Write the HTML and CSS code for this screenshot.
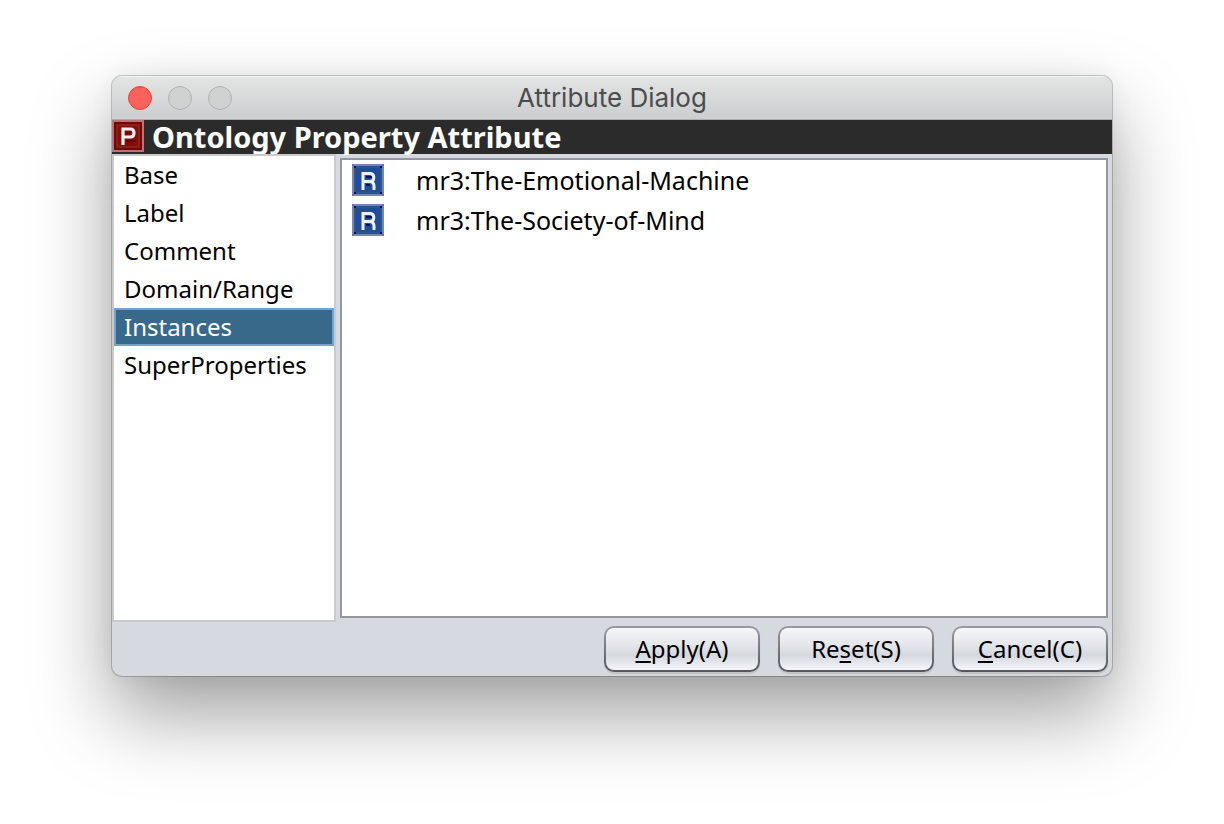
FILE: index.html
```html
<!DOCTYPE html>
<html lang="en">
<head>
<meta charset="utf-8">
<title>Attribute Dialog</title>
<link rel="stylesheet" href="styles.css">
</head>
<body>
<svg width="0" height="0" class="defs" aria-hidden="true">
  <symbol id="resource" viewBox="0 0 16 16">
    <rect width="16" height="16" fill="#7484b6"/>
    <path d="M0 0h1v1H0zM15 0h1v1h-1zM0 15h1v1H0zM15 15h1v1h-1z" fill="#6377ac"/>
    <rect x="1" y="1" width="14" height="14" fill="#2c5594"/>
    <path d="M1 1h1v1H1zM14 1h1v1h-1zM1 14h1v1H1zM14 14h1v1h-1z" fill="#04106e"/>
    <rect x="2" y="2" width="12" height="12" fill="#1f4f93"/>
    <path d="M7 6h3v1H7zM7 10h2v1H7z" fill="#04106e"/>
    <path d="M5.500 13V4.700H9Q10.900 4.700 10.900 6.700Q10.900 8.700 9 8.700H5.500M9 8.700Q11 9 11 11V13" fill="none" stroke="#eef1fa" stroke-width="1.500"/>
  </symbol>
</svg>
<main class="window">
  <header class="titlebar">
    <div class="lights">
      <button class="light close" aria-label="Close"></button>
      <button class="light" aria-label="Minimize"></button>
      <button class="light" aria-label="Zoom"></button>
    </div>
    <h1 class="title">Attribute Dialog</h1>
  </header>
  <div class="banner">
    <svg class="icon" viewBox="0 0 16 16" aria-hidden="true">
      <rect width="16" height="16" fill="#b87678"/>
      <rect x="1" y="1" width="14" height="14" fill="#780408"/>
      <rect x="2.500" y="2.500" width="11" height="11" fill="#80100a" stroke="#8a2018"/>
      <path d="M7 6h2v1H7zM7 10h5v1H7z" fill="#6a0205"/>
      <path d="M5.500 12.500V4.500H9.200Q11 4.500 11 6.500Q11 8.500 9.200 8.500H5.500" fill="none" stroke="#f8efef" stroke-width="1.600"/>
    </svg>
    <h2 class="heading">Ontology Property Attribute</h2>
  </div>
  <div class="content">
    <nav class="sections">
      <button class="section">Base</button>
      <button class="section">Label</button>
      <button class="section">Comment</button>
      <button class="section">Domain/Range</button>
      <button class="section selected" aria-current="true">Instances</button>
      <button class="section">SuperProperties</button>
    </nav>
    <ul class="instances">
      <li class="instance"><svg class="icon" aria-hidden="true"><use href="#resource"/></svg><span>mr3:The-Emotional-Machine</span></li>
      <li class="instance"><svg class="icon" aria-hidden="true"><use href="#resource"/></svg><span>mr3:The-Society-of-Mind</span></li>
    </ul>
  </div>
  <footer class="actions">
    <button class="action"><span><u>A</u>pply(A)</span></button>
    <button class="action"><span>Re<u>s</u>et(S)</span></button>
    <button class="action"><span><u>C</u>ancel(C)</span></button>
  </footer>
</main>
</body>
</html>
```
FILE: styles.css
```css
* {
  box-sizing: border-box;
}

body {
  display: flex;
  min-height: 100vh;
  margin: 0;
  padding: 76px 112px 148px;
  background: #fff;
  color: #000;
  font: 24px/38px "Noto Sans", sans-serif;
}

button {
  margin: 0;
  padding: 0;
  color: inherit;
  font: inherit;
}

.defs {
  position: absolute;
}

.window {
  display: flex;
  flex: 1;
  flex-direction: column;
  overflow: hidden;
  min-width: 0;
  border-radius: 10px;
  background: #d6d9e0;
  box-shadow: 0 0 0 1px rgba(0, 0, 0, 0.2), 0 38px 80px rgba(0, 0, 0, 0.38), 0 0 24px rgba(0, 0, 0, 0.06);
}

.titlebar {
  display: grid;
  grid-template-columns: 1fr auto 1fr;
  align-items: center;
  height: 44px;
  padding: 0 16px;
  border-top: 1px solid #f4f5f5;
  border-bottom: 1px solid #acaeae;
  background: linear-gradient(#e3e5e5, #cbcdce);
}

.lights {
  display: flex;
  gap: 16px;
}

.light {
  width: 24px;
  height: 24px;
  border: 1px solid #b0b2b2;
  border-radius: 50%;
  background: #d0d2d2;
}

.close {
  border-color: #e2463f;
  background: #fc615c;
}

.title {
  margin: 0;
  color: #4b4c4d;
  font: 400 26px/32px Inter, sans-serif;
}

.banner {
  display: flex;
  gap: 8px;
  height: 34px;
  background: #2b2b2b;
}

.icon {
  flex: none;
  width: 32px;
  height: 32px;
}

.heading {
  margin: 0;
  color: #fff;
  font-size: 29px;
  font-weight: 700;
  line-height: 34px;
}

.content {
  display: flex;
  flex: 1;
  gap: 4px;
}

.sections {
  display: flex;
  flex: none;
  flex-direction: column;
  width: 224px;
  border: 2px solid #c8cacb;
  background: #fff;
}

.section {
  height: 38px;
  padding: 0 8px;
  border: 2px solid transparent;
  background: none;
  line-height: 34px;
  text-align: left;
}

.selected {
  border-color: #73a4d1;
  background: #39698a;
  color: #fff;
}

.instances {
  flex: 1;
  margin: 4px 4px 4px 0;
  padding: 0 10px;
  border: 2px solid #9297a1;
  background: #fff;
  font-size: 25px;
  list-style: none;
}

.instance {
  display: flex;
  align-items: center;
  gap: 32px;
  height: 40px;
}

.actions {
  display: flex;
  justify-content: flex-end;
  gap: 18px;
  padding: 4px;
}

.action {
  width: 156px;
  height: 46px;
  border: 2px solid transparent;
  border-radius: 10px;
  background:
    linear-gradient(#f6f7f9, #e4e6ea 40%, #d5d8de 65%, #f4f6fa) padding-box,
    linear-gradient(#989ca2, #54575d) border-box;
  box-shadow: 0 2px 1px #c0c3ca;
  line-height: 38px;
}

u {
  text-decoration-thickness: 2px;
  text-underline-offset: 3px;
}
```
